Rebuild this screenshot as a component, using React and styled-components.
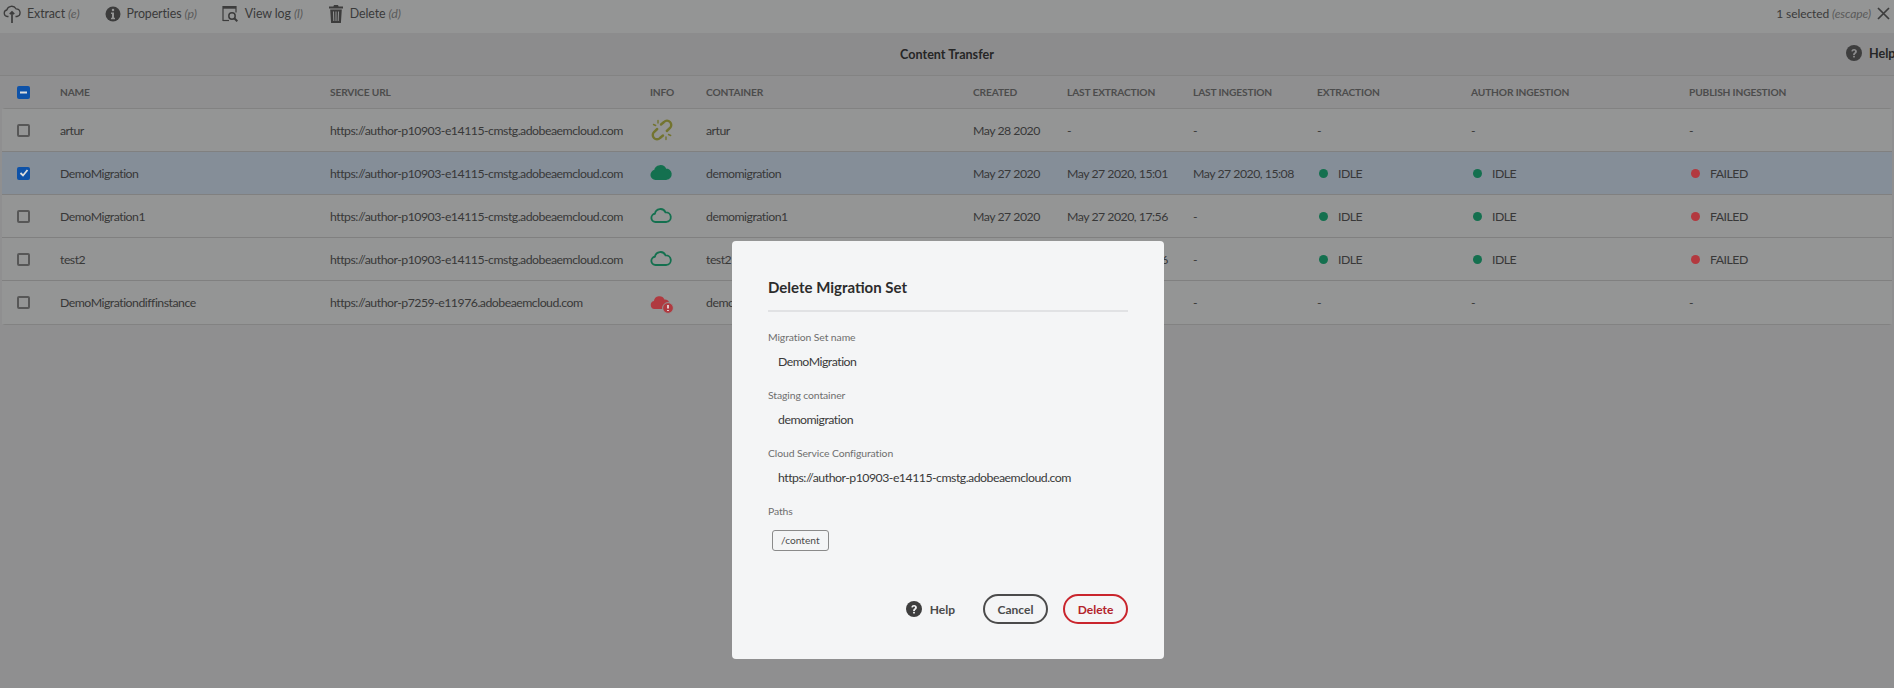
import React from "react";
import styled, { createGlobalStyle } from "styled-components";

const Global = createGlobalStyle`
  html, body { margin: 0; padding: 0; height: 100%; background: #8f8f90; }
  body { font-family: "Lato", "Open Sans", sans-serif; font-size: 12px; color: #333; }
  #root { height: 688px; overflow: hidden; }
`;

const Page = styled.div`
  position: relative;
  width: 1894px;
  height: 688px;
  overflow: hidden;
  background: #8f8f90;
`;

const Toolbar = styled.header`
  display: flex;
  align-items: center;
  justify-content: space-between;
  height: 33px;
  padding: 0 4px 6px 3px;
  box-sizing: border-box;
  background: #949595;
  box-shadow: 0 1px 2px rgba(0, 0, 0, 0.35);
`;

const Actions = styled.div`
  display: flex;
  align-items: center;
  gap: 25px;
`;

const Action = styled.div`
  display: flex;
  align-items: center;
  gap: 6px;
  font-size: 12.4px;
  letter-spacing: -0.1px;
  color: #3a3a3a;
`;

const Hint = styled.em`
  color: #5a5a5a;
  font-style: italic;
`;

const Selected = styled.div`
  display: flex;
  align-items: center;
  gap: 6px;
  font-size: 12px;
  letter-spacing: -0.1px;
  color: #3a3a3a;
`;

const TitleBar = styled.div`
  position: relative;
  display: flex;
  align-items: center;
  justify-content: center;
  height: 42px;
  font-weight: 700;
  font-size: 12.6px;
  color: #262626;
  background: #8c8c8d;
  border-bottom: 1px solid #838383;
`;

const PageHelp = styled.div`
  position: absolute;
  left: 1846px;
  top: 12px;
  display: flex;
  align-items: center;
  gap: 7px;
  font-weight: 700;
  white-space: nowrap;
`;

const Columns = "58px 270px 320px 56px 267px 94px 126px 124px 154px 218px 1fr";

const HeadRow = styled.div`
  display: grid;
  grid-template-columns: ${Columns};
  align-items: center;
  height: 32px;
  margin: 0 2px;
  font-size: 10.2px;
  font-weight: 700;
  letter-spacing: -0.15px;
  text-transform: uppercase;
  color: #4c4c4c;
`;

const Body = styled.div`
  margin: 0 2px;
  border: 1px solid #828282;
  border-radius: 3px;
`;

const Row = styled.div`
  display: grid;
  grid-template-columns: ${Columns};
  align-items: center;
  height: 43px;
  box-sizing: border-box;
  margin: 0 -1px;
  border-bottom: 1px solid #808080;
  background: ${(p) => (p.$selected ? "#858e98" : "#949595")};
  color: #383838;
  font-size: 12.3px;
  letter-spacing: -0.5px;
  &:last-child { border-bottom: 0; }
`;

const Cell = styled.div`
  white-space: nowrap;
  display: flex;
  align-items: center;
  gap: 10px;
`;

const CheckCell = styled.div`
  display: flex;
  padding-left: 15px;
`;

const Check = styled.span`
  display: flex;
  align-items: center;
  justify-content: center;
  width: 13px;
  height: 13px;
  box-sizing: border-box;
  border-radius: 2px;
  border: ${(p) => (p.$on ? "0" : "2px solid #575757")};
  background: ${(p) => (p.$on ? "#0e52a8" : "transparent")};
`;

const Dot = styled.span`
  width: 9px;
  height: 9px;
  border-radius: 50%;
  margin-left: 2px;
  background: ${(p) => (p.$failed ? "#b3393f" : "#14704f")};
`;

const ModalLayer = styled.div`
  position: absolute;
  inset: 0;
  display: flex;
  justify-content: center;
  align-items: flex-start;
  padding: 241px 0 0 2px;
  box-sizing: border-box;
`;

const Modal = styled.section`
  display: flex;
  flex-direction: column;
  width: 432px;
  height: 418px;
  box-sizing: border-box;
  padding: 35px 36px 0;
  border-radius: 4px;
  background: #f4f5f6;
`;

const Heading = styled.h2`
  margin: 0;
  padding-bottom: 12px;
  font-size: 15px;
  line-height: 22px;
  font-weight: 700;
  color: #2c2c2c;
  border-bottom: 2px solid #e1e2e4;
`;

const Fields = styled.div`
  display: flex;
  flex-direction: column;
  gap: 14px;
  margin-top: 17px;
`;

const Label = styled.div`
  font-size: 10.4px;
  letter-spacing: -0.1px;
  line-height: 16px;
  color: #6e6e6e;
`;

const Value = styled.div`
  margin-top: 6px;
  padding-left: 10px;
  font-size: 12.3px;
  letter-spacing: -0.5px;
  line-height: 22px;
  white-space: nowrap;
  color: #3a3a3a;
`;

const Tag = styled.span`
  display: block;
  width: fit-content;
  box-sizing: border-box;
  height: 21px;
  margin: 11px 0 0 4px;
  padding: 0 8px;
  border: 1px solid #8a8a8a;
  border-radius: 3px;
  font-size: 10.2px;
  line-height: 19px;
  color: #4b4b4b;
`;

const Footer = styled.footer`
  display: flex;
  align-items: center;
  justify-content: flex-end;
  margin-top: 43px;
`;

const HelpLink = styled.div`
  display: flex;
  align-items: center;
  gap: 8px;
  margin-right: 28px;
  font-size: 12px;
  font-weight: 700;
  color: #4b4b4b;
`;

const Pill = styled.button`
  width: 65px;
  height: 30px;
  margin-left: ${(p) => (p.$danger ? "15px" : "0")};
  padding: 0;
  border-radius: 15px;
  background: transparent;
  border: 2px solid ${(p) => (p.$danger ? "#c9252d" : "#4b4b4b")};
  color: ${(p) => (p.$danger ? "#b3232b" : "#4b4b4b")};
  font: 700 12px "Lato", sans-serif;
`;

const CloudPath =
  "M6 18.5a4.5 4.5 0 0 1-.6-8.96A6 6 0 0 1 16.9 8.1 5.2 5.2 0 0 1 18 18.5Z";

const Cloud = ({ filled }) => (
  <svg width="22" height="22" viewBox="0 0 24 24" fill={filled ? "#14704f" : "none"} stroke="#14704f" strokeWidth="2" strokeLinejoin="round">
    <path d={CloudPath} />
  </svg>
);

const CloudError = () => (
  <svg width="24" height="22" viewBox="0 0 24 22">
    <path d="M4.5 17a4 4 0 0 1-.6-7.9A5.5 5.5 0 0 1 14.4 7.6 4.7 4.7 0 0 1 15.5 17Z" fill="#b03a40" />
    <circle cx="18" cy="16" r="5.4" fill="#b03a40" stroke="#949595" strokeWidth="1" />
    <path d="M18 13v3.4M18 18v1" stroke="#eee" strokeWidth="1.6" />
  </svg>
);

const BrokenLink = () => (
  <svg width="24" height="24" viewBox="0 0 24 24" fill="none" stroke="#73742f" strokeWidth="2.4" strokeLinecap="round">
    <path d="M11 6.5 14 4a4.2 4.2 0 0 1 6 6l-3.2 3" />
    <path d="M13 17.5 10 20a4.2 4.2 0 0 1-6-6l3.2-3" />
    <path d="M8 2.5v2.5M3.5 6.5l2.2 1M16 19v2.5M18.5 16.5l2.2 1" strokeWidth="1.4" />
  </svg>
);

const UploadIcon = () => (
  <svg width="18" height="20" viewBox="0 0 18 20" fill="none" stroke="#3c3c3c" strokeWidth="1.3">
    <path d="M5.5 12.5H4.3a3.3 3.3 0 0 1-.5-6.5A5 5 0 0 1 13 4.8a3.9 3.9 0 0 1 1 7.7h-1.5" />
    <path d="M9 19V8M6.8 10.2 9 8l2.2 2.2" strokeWidth="1.7" />
  </svg>
);

const InfoIcon = () => (
  <svg width="16" height="16" viewBox="0 0 16 16">
    <circle cx="8" cy="8" r="7.5" fill="#3c3c3c" />
    <rect x="6.8" y="2.8" width="2.4" height="2.4" rx="1" fill="#949595" />
    <path d="M6 6.6h3v5.2h1v1.4H6v-1.4h1V8H6Z" fill="#949595" />
  </svg>
);

const LogIcon = () => (
  <svg width="17" height="17" viewBox="0 0 17 17" fill="none" stroke="#3c3c3c">
    <path d="M1 16V1.5h13v6" strokeWidth="1.2" />
    <path d="M1 2.6h13" strokeWidth="2.2" />
    <path d="M1 15.5h6" strokeWidth="1.2" />
    <circle cx="10" cy="11" r="3.2" strokeWidth="1.5" />
    <path d="m12.3 13.3 3 3" strokeWidth="2" />
  </svg>
);

const TrashIcon = () => (
  <svg width="16" height="18" viewBox="0 0 16 18" fill="#3c3c3c">
    <path d="M6 0h4l.6 1.6H15V3.4H1V1.6h4.4Z" />
    <path fillRule="evenodd" d="M2.2 4.6h11.6L12.9 18H3.1ZM5 6.5l.3 9.600h1L6 6.500Zm2.500 0v9.600h1V6.500Zm2.500 0-.3 9.600h1l.3-9.600Z" />
  </svg>
);

const HelpIcon = ({ size = 16, hole = "#f4f5f6" }) => (
  <svg width={size} height={size} viewBox="0 0 16 16">
    <circle cx="8" cy="8" r="8" fill="#3e3e3e" />
    <path d="M5.2 6.2A2.9 2.9 0 0 1 8 4c1.7 0 2.9 1 2.9 2.4 0 2-2 1.900-2 3.500H7.100c0-2.400 1.900-2.300 1.900-3.500 0-.6-.4-1-1-1-.6 0-1 .4-1.200 1Z" fill={hole} />
    <rect x="7.1" y="10.7" width="1.8" height="1.8" rx=".5" fill={hole} />
  </svg>
);

const CloseIcon = () => (
  <svg width="13" height="13" viewBox="0 0 13 13" stroke="#3c3c3c" strokeWidth="1.7" fill="none">
    <path d="m1 1 11 11M12 1 1 12" />
  </svg>
);

const rows = [
  { name: "artur", url: "https://author-p10903-e14115-cmstg.adobeaemcloud.com", info: <BrokenLink />, container: "artur", created: "May 28 2020", lastE: "-", lastI: "-", ex: "-", au: "-", pu: "-" },
  { name: "DemoMigration", url: "https://author-p10903-e14115-cmstg.adobeaemcloud.com", info: <Cloud filled />, container: "demomigration", created: "May 27 2020", lastE: "May 27 2020, 15:01", lastI: "May 27 2020, 15:08", ex: "IDLE", au: "IDLE", pu: "FAILED", selected: true },
  { name: "DemoMigration1", url: "https://author-p10903-e14115-cmstg.adobeaemcloud.com", info: <Cloud />, container: "demomigration1", created: "May 27 2020", lastE: "May 27 2020, 17:56", lastI: "-", ex: "IDLE", au: "IDLE", pu: "FAILED" },
  { name: "test2", url: "https://author-p10903-e14115-cmstg.adobeaemcloud.com", info: <Cloud />, container: "test2", created: "May 27 2020", lastE: "May 27 2020, 17:56", lastI: "-", ex: "IDLE", au: "IDLE", pu: "FAILED" },
  { name: "DemoMigrationdiffinstance", url: "https://author-p7259-e11976.adobeaemcloud.com", info: <CloudError />, container: "demomigrationdiffinstance", created: "May 27 2020", lastE: "-", lastI: "-", ex: "-", au: "-", pu: "-" },
];

const Status = ({ value }) =>
  value === "-" ? (
    <Cell>-</Cell>
  ) : (
    <Cell>
      <Dot $failed={value === "FAILED"} />
      {value}
    </Cell>
  );

const heads = ["Name", "Service URL", "Info", "Container", "Created", "Last Extraction", "Last Ingestion", "Extraction", "Author Ingestion", "Publish Ingestion"];

const fields = [
  ["Migration Set name", "DemoMigration"],
  ["Staging container", "demomigration"],
  ["Cloud Service Configuration", "https://author-p10903-e14115-cmstg.adobeaemcloud.com"],
];

export default function App() {
  return (
    <Page>
      <Global />
      <Toolbar>
        <Actions>
          <Action><UploadIcon /><span>Extract <Hint>(e)</Hint></span></Action>
          <Action><InfoIcon /><span>Properties <Hint>(p)</Hint></span></Action>
          <Action><LogIcon /><span>View log <Hint>(l)</Hint></span></Action>
          <Action><TrashIcon /><span>Delete <Hint>(d)</Hint></span></Action>
        </Actions>
        <Selected>
          <span>1 selected <Hint>(escape)</Hint></span>
          <CloseIcon />
        </Selected>
      </Toolbar>
      <TitleBar>
        Content Transfer
        <PageHelp><HelpIcon hole="#8c8c8d" />Help</PageHelp>
      </TitleBar>
      <HeadRow>
        <CheckCell>
          <Check $on>
            <svg width="9" height="9" viewBox="0 0 9 9"><rect x="1" y="3.5" width="7" height="2" fill="#ddd" /></svg>
          </Check>
        </CheckCell>
        {heads.map((h) => <div key={h}>{h}</div>)}
      </HeadRow>
      <Body>
        {rows.map((r) => (
          <Row key={r.name} $selected={r.selected}>
            <CheckCell>
              <Check $on={r.selected}>
                {r.selected && (
                  <svg width="10" height="10" viewBox="0 0 10 10" fill="none" stroke="#ddd" strokeWidth="1.8"><path d="m1.5 5 2.5 2.5 4.5-5.500" /></svg>
                )}
              </Check>
            </CheckCell>
            <Cell>{r.name}</Cell>
            <Cell>{r.url}</Cell>
            <Cell>{r.info}</Cell>
            <Cell>{r.container}</Cell>
            <Cell>{r.created}</Cell>
            <Cell>{r.lastE}</Cell>
            <Cell>{r.lastI}</Cell>
            <Status value={r.ex} />
            <Status value={r.au} />
            <Status value={r.pu} />
          </Row>
        ))}
      </Body>
      <ModalLayer>
        <Modal>
          <Heading>Delete Migration Set</Heading>
          <Fields>
            {fields.map(([l, v]) => (
              <div key={l}>
                <Label>{l}</Label>
                <Value>{v}</Value>
              </div>
            ))}
            <div>
              <Label>Paths</Label>
              <Tag>/content</Tag>
            </div>
          </Fields>
          <Footer>
            <HelpLink><HelpIcon />Help</HelpLink>
            <Pill>Cancel</Pill>
            <Pill $danger>Delete</Pill>
          </Footer>
        </Modal>
      </ModalLayer>
    </Page>
  );
}
